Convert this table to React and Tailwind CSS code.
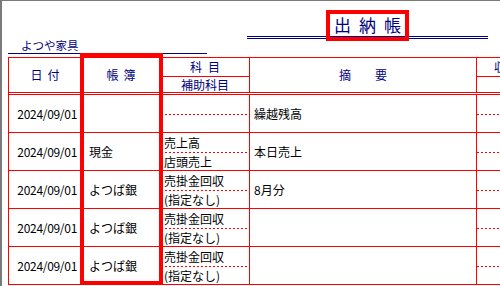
import React from "react";

const COLS = "grid grid-cols-[73px_79px_89px_227px_1fr]";
const DASH = "h-px bg-[repeating-linear-gradient(90deg,#ff0000_0_2px,transparent_2px_4px)]";

const rows = [
  { date: "2024/09/01", book: "", sub1: "", sub2: "", memo: "繰越残高" },
  { date: "2024/09/01", book: "現金", sub1: "売上高", sub2: "店頭売上", memo: "本日売上" },
  { date: "2024/09/01", book: "よつば銀", sub1: "売掛金回収", sub2: "(指定なし)", memo: "8月分" },
  { date: "2024/09/01", book: "よつば銀", sub1: "売掛金回収", sub2: "(指定なし)", memo: "" },
  { date: "2024/09/01", book: "よつば銀", sub1: "売掛金回収", sub2: "(指定なし)", memo: "" },
];

function Row({ r }) {
  return (
    <div className={`${COLS} h-[38px] border-b border-[#ff0000] text-[12px] leading-[14px] text-black`}>
      <div className="flex items-center justify-end pr-[4px] border-r border-[#ff0000] tracking-[-0.3px]">{r.date}</div>
      <div className="flex items-center pl-[7px] border-r border-[#ff0000]">{r.book}</div>
      <div className="flex flex-col border-r border-[#ff0000]">
        <div className="h-[19px] flex items-center pl-[3px] whitespace-nowrap">{r.sub1}</div>
        <div className={DASH} />
        <div className="flex-1 flex items-center pl-[3px] whitespace-nowrap">{r.sub2}</div>
      </div>
      <div className="flex items-center pl-[4px] border-r border-[#ff0000]">{r.memo}</div>
      <div className="flex flex-col">
        <div className="h-[19px]" />
        <div className={DASH} />
        <div className="flex-1" />
      </div>
    </div>
  );
}

export default function App() {
  return (
    <div className="relative w-[500px] h-[286px] overflow-hidden bg-white border-l-2 border-t border-[#7a7a7a] font-['Noto_Sans_CJK_JP',sans-serif]">
      {/* header area */}
      <div className="flex h-[56px]">
        <div className="ml-[6px] w-[199px] self-end mb-[3px] border-b border-[#000080] pl-[13px] pb-[1px] text-[11.5px] leading-[14px] text-[#000080]">
          よつや家具
        </div>
        <div className="ml-[40px] w-[241px] flex flex-col">
          <div className="h-[35px] flex items-end justify-center pb-[1px] gap-[8px] text-[17px] leading-[20px] text-[#000080]">
            <span>出</span>
            <span>納</span>
            <span>帳</span>
          </div>
          <div className="h-[3px] border-y border-[#000080]" />
        </div>
      </div>

      {/* table */}
      <div className="ml-[6px] border-l border-t border-[#ff0000]">
        <div className={`${COLS} h-[34px] text-[12px] leading-[14px] text-[#000080]`}>
          <div className="flex items-center justify-center gap-[5px] border-r border-[#ff0000]">
            <span>日</span><span>付</span>
          </div>
          <div className="flex items-center justify-center gap-[5px] border-r border-[#ff0000]">
            <span>帳</span><span>簿</span>
          </div>
          <div className="flex flex-col border-r border-[#ff0000]">
            <div className="h-[18px] flex items-center justify-center gap-[6px]">
              <span>科</span><span>目</span>
            </div>
            <div className="h-px bg-[#ff0000]" />
            <div className="flex-1 flex items-center justify-center">補助科目</div>
          </div>
          <div className="flex items-center justify-center border-r border-[#ff0000]">摘　　要</div>
          <div className="flex flex-col">
            <div className="h-[18px] flex items-center pl-[17px] whitespace-nowrap">収　入</div>
            <div className="h-px bg-[#ff0000]" />
            <div className="flex-1" />
          </div>
        </div>
        <div className="h-[3px] border-y border-[#ff0000]" />
        {rows.map((r, i) => (
          <Row key={i} r={r} />
        ))}
      </div>

      {/* highlight boxes */}
      <div className="absolute left-[324px] top-[9px] w-[83px] h-[31px] border-4 border-[#ff0000]" />
      <div className="absolute left-[78px] top-[52px] w-[83px] h-[232px] border-4 border-[#ff0000]" />
    </div>
  );
}
